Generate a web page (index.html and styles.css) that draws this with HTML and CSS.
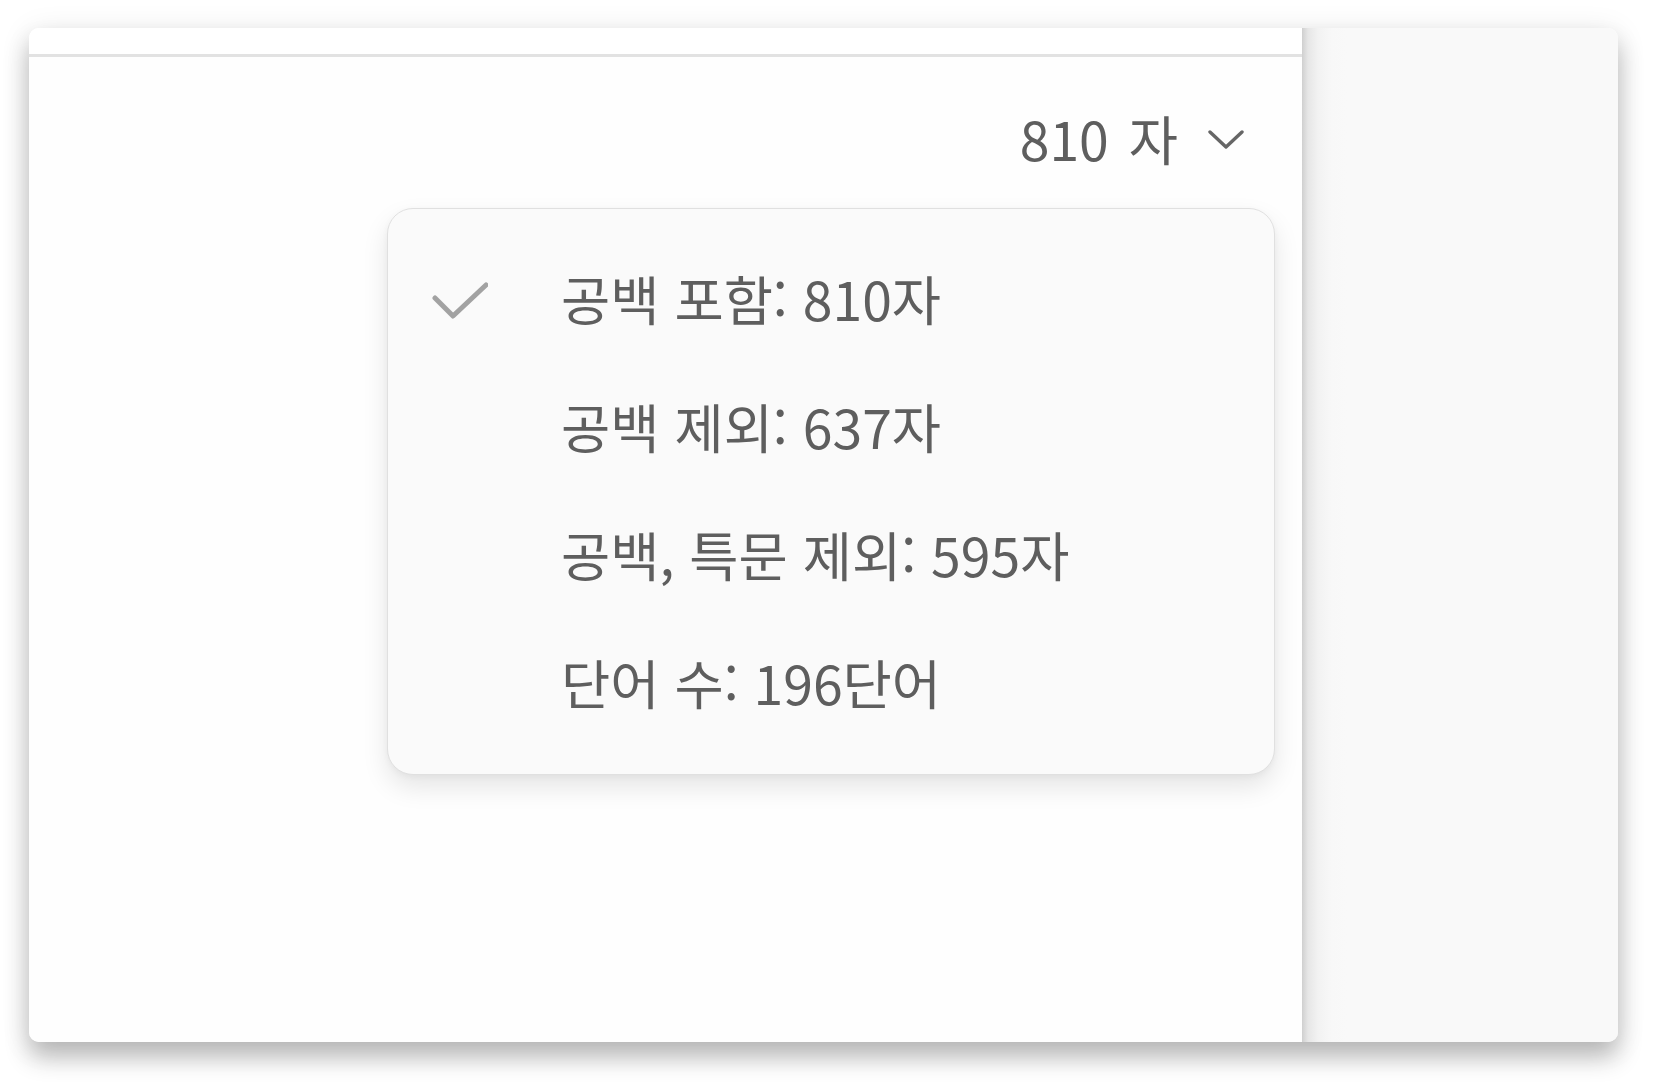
FILE: index.html
```
<!DOCTYPE html>
<html lang="ko">
<head>
<meta charset="utf-8">
<title>글자 수</title>
<link rel="stylesheet" href="styles.css">
</head>
<body>
<div class="window">
  <div class="main">
    <div class="topbar"></div>
    <div class="content">
      <div class="counter">
        <span class="count">810 자</span>
        <svg class="chev" width="36" height="20" viewBox="0 0 36 20"><path d="M2 2 L18 17 L34 2" fill="none" stroke="#666" stroke-width="3.4" stroke-linecap="round" stroke-linejoin="round"/></svg>
      </div>
      <div class="menu">
        <div class="item">
          <svg class="check" width="56" height="38" viewBox="0 0 56 38"><path d="M3 16 L21 34 L54 3" fill="none" stroke="#a2a2a2" stroke-width="5" stroke-linecap="round" stroke-linejoin="round"/></svg>
          <span class="label">공백 포함: 810자</span>
        </div>
        <div class="item"><span class="label">공백 제외: 637자</span></div>
        <div class="item"><span class="label">공백, 특문 제외: 595자</span></div>
        <div class="item"><span class="label">단어 수: 196단어</span></div>
      </div>
    </div>
  </div>
  <div class="sidebar"></div>
</div>
</body>
</html>
```
FILE: styles.css
```
html, body {
  margin: 0;
  padding: 0;
  background: #ffffff;
}
body {
  padding: 28px 46px 44px 29px;
  font-family: "Noto Sans CJK KR", "Noto Sans", sans-serif;
  color: #5e5e5e;
}
.window {
  display: flex;
  width: 1589px;
  height: 1014px;
  border-radius: 10px;
  overflow: hidden;
  background: #fefefe;
  box-shadow: 0 16px 24px rgba(0,0,0,0.24), 0 4px 30px rgba(0,0,0,0.10);
}
.main {
  width: 1273px;
  display: flex;
  flex-direction: column;
  background: #fefefe;
}
.topbar {
  height: 26px;
  border-bottom: 3px solid #e2e2e2;
  background: #ffffff;
}
.content {
  position: relative;
  flex: 1;
}
.counter {
  display: flex;
  justify-content: flex-end;
  align-items: center;
  gap: 30px;
  padding: 52px 58px 0 0;
  height: 58px;
}
.count {
  font-size: 53.5px;
  line-height: 58px;
  word-spacing: 5px;
}
.chev {
  display: block;
  margin-top: 4px;
}
.menu {
  position: absolute;
  left: 358px;
  top: 151px;
  width: 886px;
  padding: 25px 0 28px 0;
  background: #fafafa;
  border: 1.5px solid #e0e0e0;
  border-radius: 26px;
  box-shadow: 0 12px 26px rgba(0,0,0,0.10), 0 2px 6px rgba(0,0,0,0.04);
}
.item {
  display: flex;
  align-items: center;
  height: 128px;
  padding-left: 173px;
  position: relative;
}
.check {
  position: absolute;
  left: 44px;
  top: 48px;
}
.label {
  font-size: 53.5px;
  line-height: 60px;
  white-space: nowrap;
}
.sidebar {
  flex: 1;
  background: linear-gradient(to right, #cfcfcf 0, #e6e6e6 6px, #f2f2f2 16px, #f8f8f8 30px, #f9f9f9 45px);
}
```
